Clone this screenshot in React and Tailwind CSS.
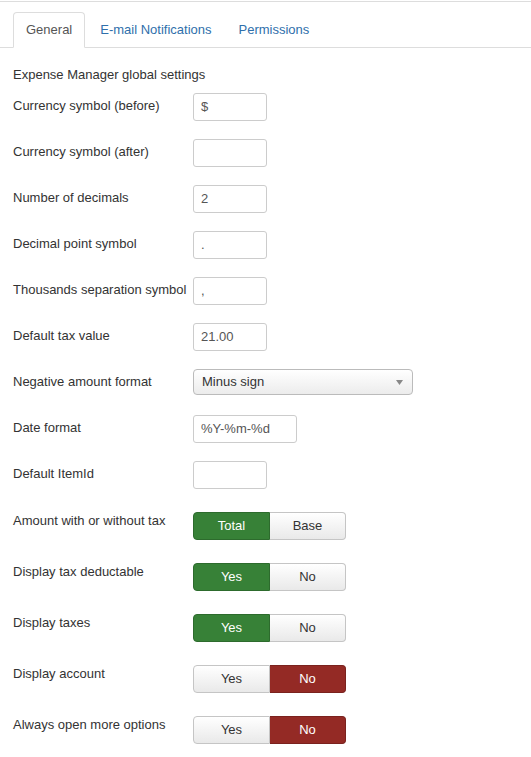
import React from 'react';

const inputRows = [
  { label: 'Currency symbol (before)', value: '$', w: 'w-[74px]' },
  { label: 'Currency symbol (after)', value: '', w: 'w-[74px]' },
  { label: 'Number of decimals', value: '2', w: 'w-[74px]' },
  { label: 'Decimal point symbol', value: '.', w: 'w-[74px]' },
  { label: 'Thousands separation symbol', value: ',', w: 'w-[74px]' },
  { label: 'Default tax value', value: '21.00', w: 'w-[74px]' },
];

const toggles = [
  { label: 'Amount with or without tax', options: ['Total', 'Base'], active: 0 },
  { label: 'Display tax deductable', options: ['Yes', 'No'], active: 0 },
  { label: 'Display taxes', options: ['Yes', 'No'], active: 0 },
  { label: 'Display account', options: ['Yes', 'No'], active: 1 },
  { label: 'Always open more options', options: ['Yes', 'No'], active: 1 },
];

const TextInput = ({ value, w }) => (
  <div className={`${w} h-[28px] border border-[#cccccc] rounded-[3px] bg-white px-[7px] flex items-center text-[13px] text-[#555]`}>
    {value}
  </div>
);

const Row = ({ label, children, toggle }) => (
  <div className={`flex ${toggle ? 'items-start mb-[23px]' : 'items-center mb-[18px]'}`}>
    <div className={`w-[180px] text-[13px] text-[#333] ${toggle ? 'leading-[18px]' : 'mt-[-2px]'}`}>{label}</div>
    {children}
  </div>
);

const Toggle = ({ options, active }) => (
  <div className="flex h-[28px] w-[153px] text-[13px]">
    {options.map((opt, i) => {
      const on = i === active;
      const color = i === 0 ? 'bg-[#378137] border-[#2d6b2d]' : 'bg-[#942a25] border-[#7a221e]';
      return (
        <div
          key={opt}
          className={`flex-1 flex items-center justify-center border ${
            i === 0 ? 'rounded-l-[4px]' : 'rounded-r-[4px] border-l-0'
          } ${
            on
              ? `${color} text-white`
              : 'bg-gradient-to-b from-white to-[#e9e9e9] border-[#c5c5c5] text-[#333]'
          }`}
        >
          {opt}
        </div>
      );
    })}
  </div>
);

export default function App() {
  return (
    <div className="min-h-screen bg-white font-['Liberation_Sans',Arial,sans-serif] pt-[1px]">
      <div className="border-t border-[#dddddd] pt-[10px]">
        {/* tabs */}
        <div className="flex border-b border-[#dddddd] pl-[13px] h-[36px]">
          <div className="h-[36px] px-[12px] border border-[#dddddd] border-b-white rounded-t-[4px] bg-white text-[#555] text-[13px] leading-[18px] pt-[8px] mr-[3px]">
            General
          </div>
          <div className="px-[12px] text-[#2f6fab] text-[13px] leading-[18px] pt-[9px] mr-[3px]">
            E-mail Notifications
          </div>
          <div className="px-[12px] text-[#2f6fab] text-[13px] leading-[18px] pt-[9px]">
            Permissions
          </div>
        </div>

        <div className="px-[13px] pt-[18px]">
          <div className="text-[13px] text-[#333] leading-[18px] mb-[9px]">Expense Manager global settings</div>

          {inputRows.map((r) => (
            <Row key={r.label} label={r.label}>
              <TextInput value={r.value} w={r.w} />
            </Row>
          ))}

          <Row label="Negative amount format">
            <div className="h-[28px] flex items-start">
              <div className="w-[220px] h-[26px] border border-[#bbbbbb] rounded-[4px] bg-gradient-to-b from-white to-[#ececec] flex items-center justify-between pl-[8px] pr-[9px] text-[13px] text-[#333]">
                <span>Minus sign</span>
                <svg width="7" height="5" viewBox="0 0 7 5">
                  <path d="M0 0 L7 0 L3.5 5 Z" fill="#888" />
                </svg>
              </div>
            </div>
          </Row>

          <Row label="Date format">
            <TextInput value="%Y-%m-%d" w="w-[104px]" />
          </Row>

          <Row label="Default ItemId">
            <TextInput value="" w="w-[74px]" />
          </Row>

          <div className="pt-[5px]">
            {toggles.map((t) => (
              <Row key={t.label} label={t.label} toggle>
                <Toggle options={t.options} active={t.active} />
              </Row>
            ))}
          </div>
        </div>
      </div>
    </div>
  );
}
